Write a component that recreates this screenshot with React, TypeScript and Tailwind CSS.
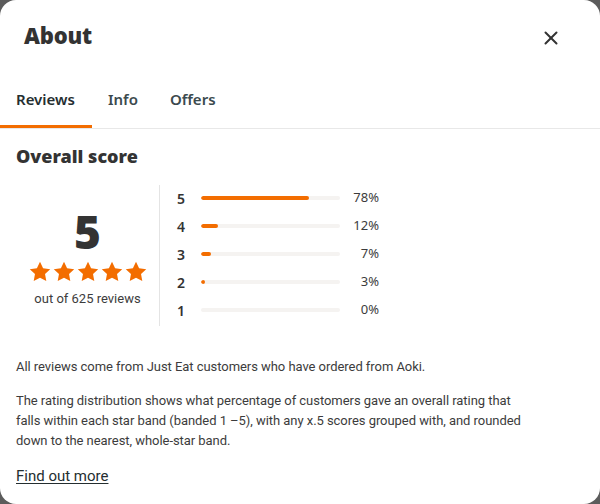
import React from 'react';
import { X } from 'lucide-react';

const distribution = [
  { stars: 5, pct: 78 },
  { stars: 4, pct: 12 },
  { stars: 3, pct: 7 },
  { stars: 2, pct: 3 },
  { stars: 1, pct: 0 },
];

const Star: React.FC = () => (
  <svg width="22" height="21" viewBox="0 0 24 23" className="fill-[#f36d00]">
    <path d="M12 0.8l3.4 7.1 7.8 1-5.7 5.4 1.4 7.7L12 18.3 5.1 22l1.4-7.7L0.8 8.9l7.8-1z" />
  </svg>
);

const heavy = { fontFamily: '"Noto Sans", "DejaVu Sans", sans-serif' };

const App: React.FC = () => {
  return (
    <div className="w-[600px] h-[504px] bg-[#5c5c5c] overflow-hidden">
      <div
        className="h-full bg-white rounded-[16px] text-[#242e30]"
        style={{ fontFamily: 'Roboto, "Noto Sans", sans-serif' }}
      >
        {/* header */}
        <div className="flex items-center justify-between pl-6 pr-[38px] h-[72px]">
          <h1 className="text-[22px] font-black leading-none text-[#333] tracking-[-0.2px] -mt-[3px]" style={heavy}>
            About
          </h1>
          <X size={22} strokeWidth={2.2} className="text-[#333] mt-[4px]" />
        </div>

        {/* tabs */}
        <div className="flex border-b border-[#e8e8e8] h-[57px]">
          {['Reviews', 'Info', 'Offers'].map((t, i) => (
            <div
              key={t}
              className={`flex items-center pt-[2px] text-[15px] font-semibold ${
                i === 0
                  ? 'pl-4 pr-4 w-[92px] border-b-[3px] border-[#f36d00] text-[#242e30]'
                  : 'px-4 text-[#3b4a4e] border-b-[3px] border-transparent'
              }`}
              style={{ fontFamily: '"Noto Sans", sans-serif' }}
            >
              {t}
            </div>
          ))}
        </div>

        {/* overall score */}
        <div className="px-4">
          <h2 className="text-[18px] font-black mt-[18px] leading-none text-[#333]" style={heavy}>
            Overall score
          </h2>

          <div className="flex mt-[20px]">
            <div className="w-[144px] border-r border-[#e4e4e4] h-[141px] flex flex-col items-center justify-center pt-[6px]">
              <div className="text-[46px] font-black leading-none text-[#333]" style={heavy}>
                5
              </div>
              <div className="flex gap-[2px] mt-[7px]">
                {[0, 1, 2, 3, 4].map((i) => (
                  <Star key={i} />
                ))}
              </div>
              <div className="text-[13px] text-[#3c3c3c] mt-[7px]">out of 625 reviews</div>
            </div>

            <div className="flex flex-col pl-[17px] pt-[4px] gap-[10px]" style={{ fontFamily: '"Noto Sans", sans-serif' }}>
              {distribution.map((d) => (
                <div key={d.stars} className="flex items-center h-[18px]">
                  <span className="w-[24px] text-[14px] font-semibold text-[#333]">{d.stars}</span>
                  <div className="w-[139px] h-[4px] rounded-full bg-[#f5f3f1] overflow-hidden">
                    <div className="h-full rounded-full bg-[#f36d00]" style={{ width: `${d.pct}%` }} />
                  </div>
                  <span className="w-[39px] text-right text-[13px] text-[#3c3c3c]">{d.pct}%</span>
                </div>
              ))}
            </div>
          </div>

          <p className="text-[13px] leading-[20px] text-[#3c3c3c] mt-[31px] tracking-[-0.05px]">
            All reviews come from Just Eat customers who have ordered from Aoki.
          </p>
          <p className="text-[13px] leading-[20px] text-[#3c3c3c] mt-[14px] w-[518px] tracking-[-0.05px]">
            The rating distribution shows what percentage of customers gave an overall rating that falls within
            each star band (banded 1 –5), with any x.5 scores grouped with, and rounded down to the nearest,
            whole-star band.
          </p>
          <a className="inline-block mt-[14px] text-[15px] underline underline-offset-2 text-[#242e30]">Find out more</a>
        </div>
      </div>
    </div>
  );
};

export default App;
